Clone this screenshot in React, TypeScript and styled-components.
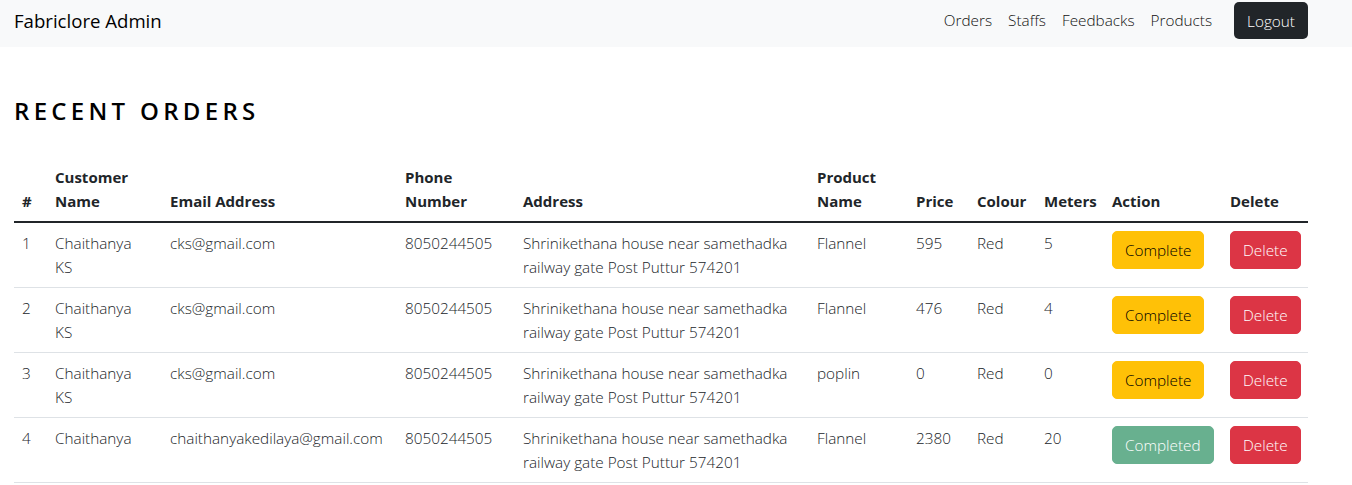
import * as React from "react"
import styled, { createGlobalStyle } from "styled-components"

const GlobalStyle = createGlobalStyle`
  * { box-sizing: border-box; }
  body {
    margin: 0;
    font-family: "Open Sans", "Noto Sans", sans-serif;
    font-weight: 300;
    font-size: 15.3px;
    line-height: 24px;
    color: #212529;
    background: #fff;
  }
`

interface Order {
  id: number
  name: string
  email: string
  phone: string
  address: string
  product: string
  price: number
  colour: string
  meters: number
  done: boolean
}

const orders: Order[] = [
  { id: 1, name: "Chaithanya KS", email: "cks@gmail.com", phone: "8050244505", address: "Shrinikethana house near samethadka railway gate Post Puttur 574201", product: "Flannel", price: 595, colour: "Red", meters: 5, done: false },
  { id: 2, name: "Chaithanya KS", email: "cks@gmail.com", phone: "8050244505", address: "Shrinikethana house near samethadka railway gate Post Puttur 574201", product: "Flannel", price: 476, colour: "Red", meters: 4, done: false },
  { id: 3, name: "Chaithanya KS", email: "cks@gmail.com", phone: "8050244505", address: "Shrinikethana house near samethadka railway gate Post Puttur 574201", product: "poplin", price: 0, colour: "Red", meters: 0, done: false },
  { id: 4, name: "Chaithanya", email: "chaithanyakedilaya@gmail.com", phone: "8050244505", address: "Shrinikethana house near samethadka railway gate Post Puttur 574201", product: "Flannel", price: 2380, colour: "Red", meters: 20, done: true },
]

const columns = [
  { title: "#", width: 33 },
  { title: "Customer Name", width: 115 },
  { title: "Email Address", width: 235 },
  { title: "Phone Number", width: 118 },
  { title: "Address", width: 294 },
  { title: "Product Name", width: 99 },
  { title: "Price", width: 61 },
  { title: "Colour", width: 67 },
  { title: "Meters", width: 68 },
  { title: "Action", width: 118 },
  { title: "Delete", width: 86 },
]

const App = () => {
  return (
    <>
      <GlobalStyle />
      <Navbar>
        <Brand>Fabriclore Admin</Brand>
        <NavLinks>
          <NavLink>Orders</NavLink>
          <NavLink>Staffs</NavLink>
          <NavLink>Feedbacks</NavLink>
          <NavLink>Products</NavLink>
          <LogoutButton>Logout</LogoutButton>
        </NavLinks>
      </Navbar>
      <Main>
        <Title>RECENT ORDERS</Title>
        <Table>
          <colgroup>
            {columns.map((c) => (
              <col key={c.title} style={{ width: c.width }} />
            ))}
          </colgroup>
          <thead>
            <tr>
              {columns.map((c) => (
                <Th key={c.title}>{c.title}</Th>
              ))}
            </tr>
          </thead>
          <tbody>
            {orders.map((o) => (
              <tr key={o.id}>
                <Td>{o.id}</Td>
                <NameTd>{o.name}</NameTd>
                <Td>{o.email}</Td>
                <Td>{o.phone}</Td>
                <Td>{o.address}</Td>
                <Td>{o.product}</Td>
                <Td>{o.price}</Td>
                <Td>{o.colour}</Td>
                <Td>{o.meters}</Td>
                <Td>
                  {o.done ? (
                    <Button $variant="success" disabled>Completed</Button>
                  ) : (
                    <Button $variant="warning">Complete</Button>
                  )}
                </Td>
                <Td>
                  <Button $variant="danger">Delete</Button>
                </Td>
              </tr>
            ))}
          </tbody>
        </Table>
      </Main>
    </>
  )
}

const Navbar = styled.nav`
  height: 47px;
  background: #f8f9fa;
  display: flex;
  align-items: flex-start;
  justify-content: space-between;
  padding: 0 44px 0 14px;
`

const Brand = styled.a`
  font-size: 18.6px;
  font-weight: 400;
  line-height: 42px;
  color: #000;
`

const NavLinks = styled.div`
  display: flex;
  align-items: center;
  height: 40px;
`

const NavLink = styled.a`
  padding: 0 8px;
  color: #111;
  font-size: 15.3px;
`

const LogoutButton = styled.button`
  margin-left: 14px;
  margin-top: 1px;
  height: 37px;
  padding: 0 13px;
  background: #212529;
  color: #fff;
  border: none;
  border-radius: 5px;
  font: inherit;
  font-weight: 300;
`

const Main = styled.main`
  padding: 0 44px 0 14px;
`

const Title = styled.h3`
  margin: 50px 0 31px;
  font-size: 24px;
  font-weight: 600;
  line-height: 1.2;
  letter-spacing: 4.3px;
  color: #000;
`

const Table = styled.table`
  width: 1294px;
  table-layout: fixed;
  border-collapse: collapse;
`

const Th = styled.th`
  text-align: left;
  vertical-align: bottom;
  padding: 8px;
  font-weight: 700;
  font-size: 15px;
  line-height: 24px;
  color: #212529;
  border-bottom: 2px solid #212529;
`

const Td = styled.td`
  vertical-align: top;
  padding: 8px;
  border-bottom: 1px solid #dee2e6;
  white-space: normal;
`

const NameTd = styled(Td)`
  padding-right: 14px;
`

const variants = {
  warning: { bg: "#ffc107", fg: "#000", opacity: 1 },
  danger: { bg: "#dc3545", fg: "#fff", opacity: 1 },
  success: { bg: "#198754", fg: "#fff", opacity: 0.65 },
}

const Button = styled.button<{ $variant: keyof typeof variants }>`
  display: inline-block;
  padding: 6px 12px;
  font: inherit;
  font-weight: 300;
  line-height: 24px;
  border: 1px solid ${(p) => variants[p.$variant].bg};
  border-radius: 5px;
  background: ${(p) => variants[p.$variant].bg};
  color: ${(p) => variants[p.$variant].fg};
  opacity: ${(p) => variants[p.$variant].opacity};
`

export default App
